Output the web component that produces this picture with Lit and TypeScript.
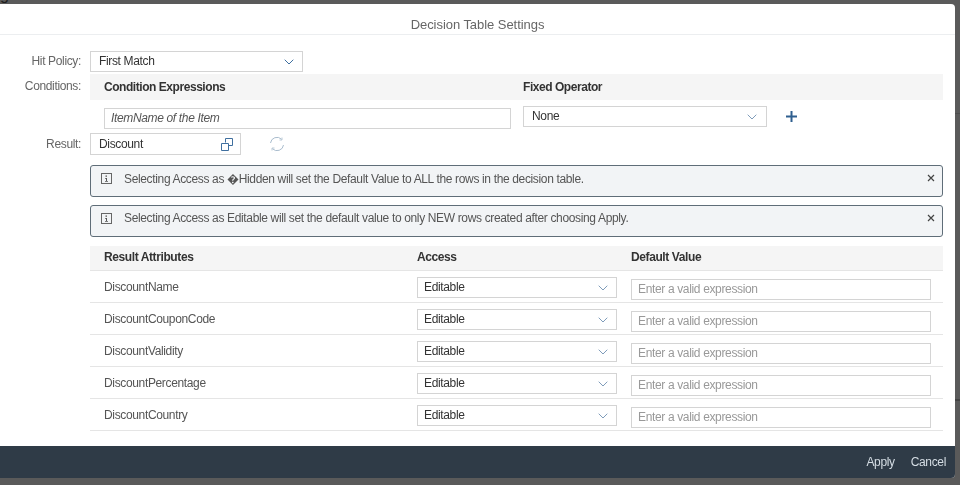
import { LitElement, html, css, svg } from 'lit';
import { customElement } from 'lit/decorators.js';

const chevron = (color: string) => html`<svg class="chev" width="10" height="6" viewBox="0 0 10 6"><path d="M.7.7 5 5 9.3.7" fill="none" stroke=${color} stroke-width="1"/></svg>`;

const rows = ['DiscountName', 'DiscountCouponCode', 'DiscountValidity', 'DiscountPercentage', 'DiscountCountry'];

const infoIcon = svg`<rect x=".5" y=".5" width="10" height="10" fill="none" stroke="#666" stroke-width="1"/><path d="M4.5 2.5h1.5v1.2h-1.500zM4 5h2v3h1v.8H4v-.8h1V5.800H4z" fill="#555"/>`;

@customElement('app-root')
export class AppRoot extends LitElement {
  static styles = css`
    :host {
      display: block;
      width: 960px;
      height: 485px;
      overflow: hidden;
      background:
        linear-gradient(#4d4d4d, #4d4d4d) 955px 113px / 5px 1px no-repeat,
        linear-gradient(#444, #444) 955px 399px / 5px 2px no-repeat,
        #5a5a5a;
      font-family: 'Liberation Sans', Arial, sans-serif;
      font-size: 12px;
      letter-spacing: -0.35px;
      color: #333;
    }
    .behind {
      height: 4px;
      overflow: hidden;
      font-size: 16px;
      line-height: 16px;
      letter-spacing: 0;
      color: #1e1e1e;
    }
    .behind span { display: block; margin-top: -13px; }
    .dialog {
      box-sizing: border-box;
      width: 955px;
      height: 474px;
      background: #fff;
      border-radius: 0 4px 4px 0;
      display: flex;
      flex-direction: column;
      overflow: hidden;
      filter: blur(0.35px);
    }
    .title {
      height: 31px;
      flex: none;
      box-sizing: border-box;
      border-bottom: 1px solid #eceef0;
      padding-top: 14px;
      text-align: center;
      font-size: 13px;
      letter-spacing: -0.05px;
      line-height: 14px;
      color: #666;
    }
    .body {
      flex: 1;
      padding: 16px 12px 0 0;
    }
    .line {
      display: grid;
      grid-template-columns: 81px 1fr;
      column-gap: 9px;
    }
    .lab {
      text-align: right;
      color: #666;
      line-height: 21px;
    }
    .cond-line .lab { line-height: 25px; }
    .res-line .lab { line-height: 22px; }
    .box {
      box-sizing: border-box;
      height: 21px;
      border: 1px solid #d4d4d4;
      background: #fff;
      display: flex;
      align-items: center;
      justify-content: space-between;
      padding: 0 8px;
      line-height: 19px;
      color: #333;
    }
    .hit { width: 213px; }
    .band {
      background: #f5f5f5;
      font-weight: bold;
      letter-spacing: -0.45px;
      color: #333;
    }
    .cond-line { margin-top: 2px; }
    .cond-band {
      height: 26px;
      display: grid;
      grid-template-columns: 419px 1fr;
      align-items: center;
      padding-left: 14px;
    }
    .cond-row {
      display: flex;
      align-items: flex-start;
      padding: 6px 0 0 14px;
      height: 27px;
    }
    .italic {
      width: 407px;
      margin-top: 2px;
      font-style: italic;
      color: #555;
      padding-left: 6px;
    }
    .none { width: 244px; margin-left: 12px; padding-right: 9px; }
    .plus { margin: 5px 0 0 19px; }
    .res-wrap { display: flex; align-items: center; }
    .res { width: 151px; height: 22px; padding-right: 7px; }
    .refresh { margin-left: 28px; }
    .strips { margin-top: 2px; }
    .strip {
      box-sizing: border-box;
      height: 32px;
      margin-top: 8px;
      border: 1px solid #5f6d78;
      border-radius: 3px;
      background: #f2f4f6;
      display: flex;
      align-items: center;
      padding: 0 7px 6px 10px;
      color: #555;
    }
    .strip svg { flex: none; }
    .strip .info { margin-right: 12px; }
    .strip span { flex: 1; }
    .close { width: 8px; height: 8px; }
    table {
      width: 100%;
      border-collapse: separate;
      border-spacing: 0;
      table-layout: fixed;
      margin-top: 9px;
    }
    th {
      box-sizing: border-box;
      height: 25px;
      padding: 0 0 2px 14px;
      text-align: left;
      background: #f5f5f5;
      border-bottom: 1px solid #e5e5e5;
      font-size: 12px;
      letter-spacing: -0.4px;
    }
    td {
      box-sizing: border-box;
      height: 32px;
      padding: 0 0 0 14px;
      border-bottom: 1px solid #e5e5e5;
      color: #555;
    }
    th:nth-child(1) { width: 313px; }
    th:nth-child(2) { width: 214px; }
    td.access { vertical-align: top; padding-top: 6px; }
    td.value { vertical-align: top; padding-top: 8px; }
    .acc { width: 200px; padding-left: 6px; }
    .val {
      box-sizing: border-box;
      height: 21px;
      width: 300px;
      border: 1px solid #d4d4d4;
      padding: 0 6px;
      line-height: 19px;
      color: #999;
    }
    .foot {
      flex: none;
      height: 32px;
      background: #2f3b47;
      display: flex;
      justify-content: flex-end;
      align-items: center;
      gap: 16px;
      padding-right: 9px;
      color: #d5dde4;
    }
  `;

  private strip(text: string) {
    return html`<div class="strip">
      <svg class="info" width="11" height="11" viewBox="0 0 11 11">${infoIcon}</svg>
      <span>${text}</span>
      <svg class="close" viewBox="0 0 8 8"><path d="M1 1 7 7M7 1 1 7" stroke="#444" stroke-width="1.200"/></svg>
    </div>`;
  }

  render() {
    return html`<div class="behind"><span>gale</span></div>
    <div class="dialog">
      <div class="title">Decision Table Settings</div>
      <div class="body">
        <div class="line">
          <div class="lab">Hit Policy:</div>
          <div class="box hit">First Match ${chevron('#3f6f9f')}</div>
        </div>
        <div class="line cond-line">
          <div class="lab">Conditions:</div>
          <div>
            <div class="band cond-band"><span>Condition Expressions</span><span>Fixed Operator</span></div>
            <div class="cond-row">
              <div class="box italic">ItemName of the Item</div>
              <div class="box none">None ${chevron('#7f9cba')}</div>
              <svg class="plus" width="11" height="11" viewBox="0 0 11 11"><path d="M5.500 0v11M0 5.500h11" stroke="#2f5f8f" stroke-width="2"/></svg>
            </div>
          </div>
        </div>
        <div class="line res-line">
          <div class="lab">Result:</div>
          <div class="res-wrap">
            <div class="box res">Discount
              <svg width="12" height="13" viewBox="0 0 12 13"><path d="M4.500 4.500V.5h7v7h-4M.5 5.500h7v7h-7z" fill="none" stroke="#3f6f9f"/></svg>
            </div>
            <svg class="refresh" width="16" height="16" viewBox="0 0 16 16"><path d="M1.500 7A6.500 6.500 0 0 1 12.500 3.200M14.500 9A6.500 6.500 0 0 1 3.500 12.800" fill="none" stroke="#a9bccd" stroke-width="1"/><path d="M13 1.500v2.500h-2.500M3 14.500V12h2.500" fill="none" stroke="#a9bccd" stroke-width=".8"/></svg>
          </div>
        </div>
        <div class="line">
          <div></div>
          <div class="strips">
            ${this.strip('Selecting Access as \uFFFDHidden will set the Default Value to ALL the rows in the decision table.')}
            ${this.strip('Selecting Access as Editable will set the default value to only NEW rows created after choosing Apply.')}
            <table>
              <thead><tr><th>Result Attributes</th><th>Access</th><th>Default Value</th></tr></thead>
              <tbody>
                ${rows.map((r) => html`<tr>
                  <td>${r}</td>
                  <td class="access"><div class="box acc">Editable ${chevron('#7f9cba')}</div></td>
                  <td class="value"><div class="val">Enter a valid expression</div></td>
                </tr>`)}
              </tbody>
            </table>
          </div>
        </div>
      </div>
      <div class="foot"><span>Apply</span><span>Cancel</span></div>
    </div>`;
  }
}
